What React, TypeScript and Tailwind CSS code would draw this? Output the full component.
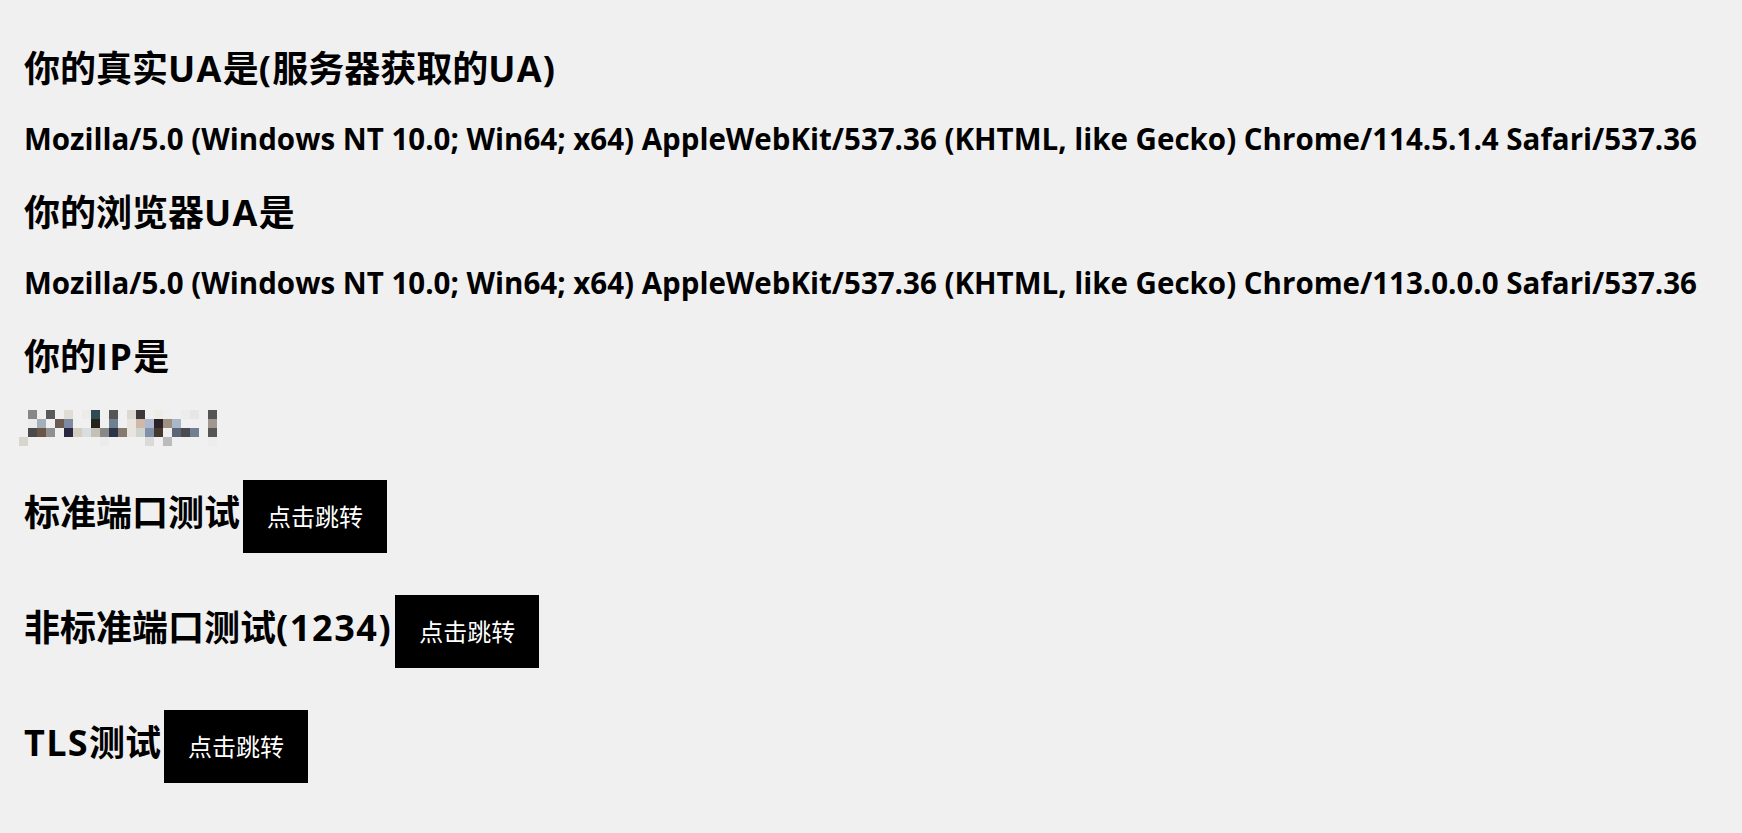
import React from "react";

const IP_ROWS: string[][] = [
  ["", "#888888", "", "#5a5a5a", "", "#e0ddd5", "", "#ecebe8", "#2d4a55", "", "#555555", "", "#dcd9d4", "#3a3a3a", "", "#efebe5", "#eef0f0", "", "#ececec", "#e6e6e6", "", "#555555"],
  ["", "#ebebec", "#a3afbb", "", "#6b5b50", "#7e8aa0", "", "", "#25231a", "", "#6f8090", "", "#e8e4e0", "#d0b8a8", "#b0b8d0", "#2a2228", "#a09080", "#a8b8c8", "", "", "", "#a09890"],
  ["", "#4a4a4a", "#6b5545", "#909090", "", "#2a2840", "#d5cdc0", "#d8dde0", "#c5c0b5", "#888888", "#2b3545", "#857a70", "#e8e4df", "#d0d4d0", "#8090a8", "#453830", "", "#5a6678", "#4a4a52", "#708090", "", "#555555"],
  ["#d8d5cc", "", "", "", "", "", "", "", "", "#ececea", "", "", "", "", "#dcdad6", "", "#bbbbbb", "", "", "", "", "#ededeb"],
];

function IpMosaic() {
  return (
    <svg width="198" height="36" viewBox="0 0 198 36" className="block">
      {IP_ROWS.map((row, r) =>
        row.map((c, i) =>
          c ? <rect key={`${r}-${i}`} x={i * 9} y={r * 9} width="9" height="9" fill={c} /> : null
        )
      )}
    </svg>
  );
}

function JumpButton() {
  return (
    <button className="ml-[3px] h-[73px] w-[144px] bg-black text-white text-[24px] font-normal leading-[73px] text-center">
      点击跳转
    </button>
  );
}

function L({ children }: { children: React.ReactNode }) {
  return <span className="tracking-[1.3px]">{children}</span>;
}

export default function App() {
  const font = { fontFamily: '"Open Sans", "Noto Sans CJK SC", sans-serif' };
  return (
    <div className="min-h-[833px] w-full bg-[#f0f0f0] text-black" style={font}>
      <div className="flex flex-col pl-6 pt-[45px]">
        <h2 className="h-[48px] text-[36px] font-bold leading-[48px]">
          你的真实<L>UA</L>是<L>(</L>服务器获取的<L>UA)</L>
        </h2>
        <h3 className="mt-[28px] h-[36px] text-[29.5px] font-bold leading-[36px] whitespace-nowrap">
          Mozilla/5.0 (Windows NT 10.0; Win64; x64) AppleWebKit/537.36 (KHTML, like Gecko) Chrome/114.5.1.4 Safari/537.36
        </h3>
        <h2 className="mt-[32px] h-[48px] text-[36px] font-bold leading-[48px]">
          你的浏览器<L>UA</L>是
        </h2>
        <h3 className="mt-[28px] h-[36px] text-[29.5px] font-bold leading-[36px] whitespace-nowrap">
          Mozilla/5.0 (Windows NT 10.0; Win64; x64) AppleWebKit/537.36 (KHTML, like Gecko) Chrome/113.0.0.0 Safari/537.36
        </h3>
        <h2 className="mt-[32px] h-[48px] text-[36px] font-bold leading-[48px]">
          你的<L>IP</L>是
        </h2>
        <div className="mt-[29px] -ml-[5px]">
          <IpMosaic />
        </div>
        <div className="mt-[34px] flex items-baseline">
          <h2 className="text-[36px] font-bold leading-[48px]">标准端口测试</h2>
          <JumpButton />
        </div>
        <div className="mt-[42px] flex items-baseline">
          <h2 className="text-[36px] font-bold leading-[48px]">
            非标准端口测试<span className="tracking-[1.6px]">(1234)</span>
          </h2>
          <JumpButton />
        </div>
        <div className="mt-[42px] flex items-baseline">
          <h2 className="text-[36px] font-bold leading-[48px]">
            <L>TLS</L>测试
          </h2>
          <JumpButton />
        </div>
      </div>
    </div>
  );
}
